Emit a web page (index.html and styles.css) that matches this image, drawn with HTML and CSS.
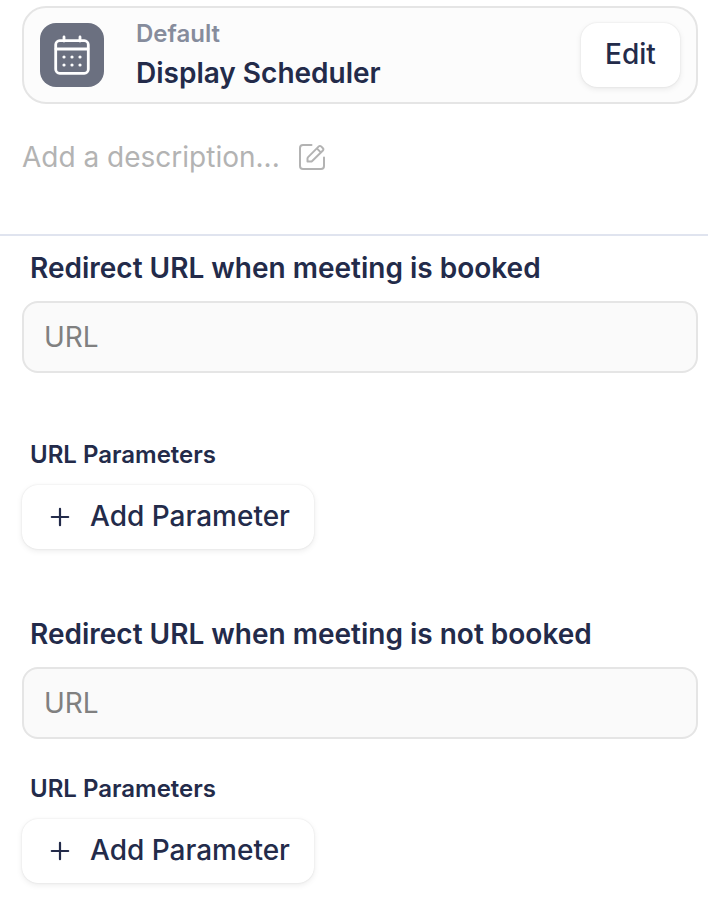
FILE: index.html
```html
<!DOCTYPE html>
<html lang="en">
<head>
<meta charset="utf-8">
<title>Display Scheduler</title>
<link rel="stylesheet" href="styles.css">
</head>
<body>
<header class="head">
  <div class="card">
    <div class="badge">
      <svg width="64" height="64" viewBox="0 0 64 64" fill="none" stroke="#fff" stroke-width="2.800" stroke-linecap="round" stroke-linejoin="round">
        <rect x="15.700" y="17.700" width="32.600" height="32.600" rx="4"/>
        <path d="M16 26h32M24 14v4M40 14v4"/>
        <path stroke-width="3.200" d="M24 34h.01M32 34h.01M40 34h.01M24 42h.01M32 42h.01M40 42h.01"/>
      </svg>
    </div>
    <div class="titles">
      <div class="kind">Default</div>
      <div class="name">Display Scheduler</div>
    </div>
    <button class="btn edit">Edit</button>
  </div>
  <div class="desc">
    <span>Add a description...</span>
    <svg width="28" height="28" viewBox="0 0 28 28" fill="none" stroke="#b3b3b3" stroke-width="2" stroke-linecap="round" stroke-linejoin="round">
      <path d="M13.500 2H5a3 3 0 0 0-3 3v18a3 3 0 0 0 3 3h18a3 3 0 0 0 3-3v-8.500"/>
      <path d="M9.500 18.500v-3a2 2 0 0 1 .6-1.400L20.800 3.400a1.600 1.600 0 0 1 2.300 0l1.800 1.800a1.600 1.600 0 0 1 0 2.300L14.200 18a2 2 0 0 1-1.400.6zM18.800 5.400l4 4"/>
    </svg>
  </div>
</header>
<main class="form">
  <section class="group booked">
    <h2>Redirect URL when meeting is booked</h2>
    <input class="url" type="text" placeholder="URL">
    <h3>URL Parameters</h3>
    <button class="btn add"><svg width="20" height="20" viewBox="0 0 20 20" stroke="#232b4a" stroke-width="2.200" stroke-linecap="round"><path d="M1.800 10h16.400M10 1.800v16.400"/></svg><span class="label">Add Parameter</span></button>
  </section>
  <section class="group">
    <h2>Redirect URL when meeting is not booked</h2>
    <input class="url" type="text" placeholder="URL">
    <h3>URL Parameters</h3>
    <button class="btn add"><svg width="20" height="20" viewBox="0 0 20 20" stroke="#232b4a" stroke-width="2.200" stroke-linecap="round"><path d="M1.800 10h16.400M10 1.800v16.400"/></svg><span class="label">Add Parameter</span></button>
  </section>
</main>
</body>
</html>
```
FILE: styles.css
```css
* { box-sizing: border-box; }
body { margin: 0; min-height: 910px; background: #fff; color: #232b4a; font-family: Inter, sans-serif; }
.head { height: 236px; padding: 6px 10px 0 22px; border-bottom: 2px solid #e0e4ef; }
.card { display: flex; align-items: center; height: 98px; padding: 0 16px; border: 2px solid #e5e5e5; border-radius: 24px; background: #fcfcfc; }
.badge { width: 64px; height: 64px; border-radius: 16px; background: #6b7080; }
.badge svg { display: block; }
.titles { flex: 1; margin-left: 32px; }
.kind { font-size: 24px; line-height: 36px; font-weight: 600; color: #868c9c; }
.name { font-size: 28px; line-height: 42px; font-weight: 600; }
.btn { border: 0; margin: 0; background: #fff; color: inherit; font: 500 28px/40px Inter, sans-serif; height: 64px; border-radius: 16px; box-shadow: 0 0 2px rgba(0,0,0,.1), 0 2px 6px rgba(0,0,0,.08); }
.edit { width: 99px; padding: 0 0 2px; }
.desc { display: flex; align-items: center; gap: 18px; margin-top: 33px; height: 40px; font-size: 28px; color: #b3b3b3; }
.form { padding: 12px 10px 0 22px; }
h2 { margin: 0 0 13px 8px; font-size: 28px; line-height: 40px; font-weight: 600; }
.url { display: block; width: 100%; height: 72px; padding: 0 20px; border: 2px solid #e5e5e5; border-radius: 16px; background: #fafafa; font: 400 28px Inter, sans-serif; }
.url::placeholder { color: #808080; opacity: 1; }
h3 { margin: 34px 0 14px 8px; font-size: 24px; line-height: 32px; font-weight: 600; }
.booked { margin-bottom: 65px; }
.booked h3 { margin-top: 66px; }
.add { display: flex; align-items: center; gap: 20px; width: 292px; padding: 0 0 0 28px; }
.label { padding-bottom: 2px; }
```
